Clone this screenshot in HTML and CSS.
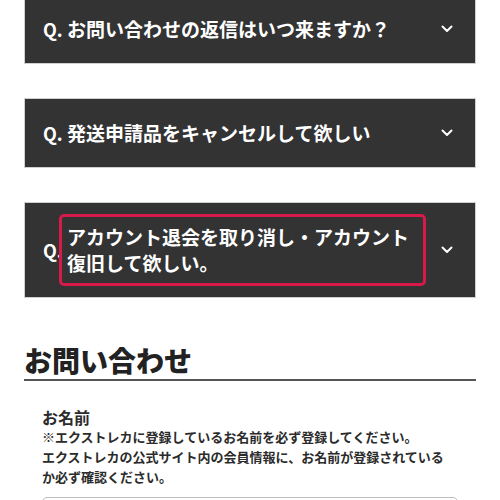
FILE: index.html
```html
<!DOCTYPE html>
<html lang="ja">
<head>
<meta charset="utf-8">
<link rel="stylesheet" href="styles.css">
</head>
<body>
<div class="page">
  <div class="faq-list">
    <div class="faq">
      <span class="q">Q.</span>
      <span class="text">お問い合わせの返信はいつ来ますか？</span>
      <svg class="chev" width="12" height="8" viewBox="0 0 12 8"><polyline points="1.5,1.5 6,6 10.5,1.5" fill="none" stroke="#fff" stroke-width="2" stroke-linecap="round" stroke-linejoin="round"/></svg>
    </div>
    <div class="faq">
      <span class="q">Q.</span>
      <span class="text">発送申請品をキャンセルして欲しい</span>
      <svg class="chev" width="12" height="8" viewBox="0 0 12 8"><polyline points="1.5,1.5 6,6 10.5,1.5" fill="none" stroke="#fff" stroke-width="2" stroke-linecap="round" stroke-linejoin="round"/></svg>
    </div>
    <div class="faq">
      <span class="q">Q.</span>
      <span class="text">アカウント退会を取り消し・アカウント復旧して欲しい。</span>
      <svg class="chev" width="12" height="8" viewBox="0 0 12 8"><polyline points="1.5,1.5 6,6 10.5,1.5" fill="none" stroke="#fff" stroke-width="2" stroke-linecap="round" stroke-linejoin="round"/></svg>
      <div class="mark"></div>
    </div>
  </div>

  <h2 class="heading">お問い合わせ</h2>

  <div class="form">
    <div class="label">お名前</div>
    <p class="note">※エクストレカに登録しているお名前を必ず登録してください。<br>エクストレカの公式サイト内の会員情報に、お名前が登録されているか必ず確認ください。</p>
    <div class="input"></div>
  </div>
</div>
</body>
</html>
```

FILE: styles.css
```css
html, body {
  margin: 0;
  padding: 0;
  background: #fff;
}

body {
  font-family: "Noto Sans CJK JP", "Noto Sans", sans-serif;
  color: #2b2b2b;
}

.page {
  padding: 0 24px;
  margin-top: -6px;
}

.faq-list {
  display: flex;
  flex-direction: column;
  gap: 34px;
}

.faq {
  position: relative;
  display: flex;
  align-items: center;
  background: #333333;
  border: 1px solid #cfcfcf;
  padding: 21px 22px 21px 18px;
  color: #fff;
  font-weight: 700;
  line-height: 26px;
}

.q {
  flex: 0 0 24px;
  font-size: 18px;
}

.text {
  flex: 1;
  font-size: 19px;
  margin-right: 20px;
}

.chev {
  flex: 0 0 12px;
  display: block;
}

.mark {
  position: absolute;
  left: 34px;
  top: 11px;
  width: 367px;
  height: 72px;
  box-sizing: border-box;
  border: 3px solid #d8194a;
  border-radius: 5px;
}

.heading {
  margin: 44px 0 0;
  font-size: 28px;
  line-height: 36px;
  font-weight: 900;
  color: #222;
  padding-bottom: 1px;
  border-bottom: 2px solid #555;
}

.form {
  padding: 0 18px;
  margin-top: 26px;
}

.label {
  font-size: 16px;
  font-weight: 700;
  line-height: 20px;
  color: #2b2b2b;
}

.note {
  margin: 0;
  max-width: 410px;
  font-size: 13px;
  font-weight: 700;
  line-height: 20px;
  color: #2b2b2b;
}

.input {
  margin-top: 10px;
  height: 40px;
  border: 1px solid #bdbdbd;
  border-radius: 5px;
}
```
